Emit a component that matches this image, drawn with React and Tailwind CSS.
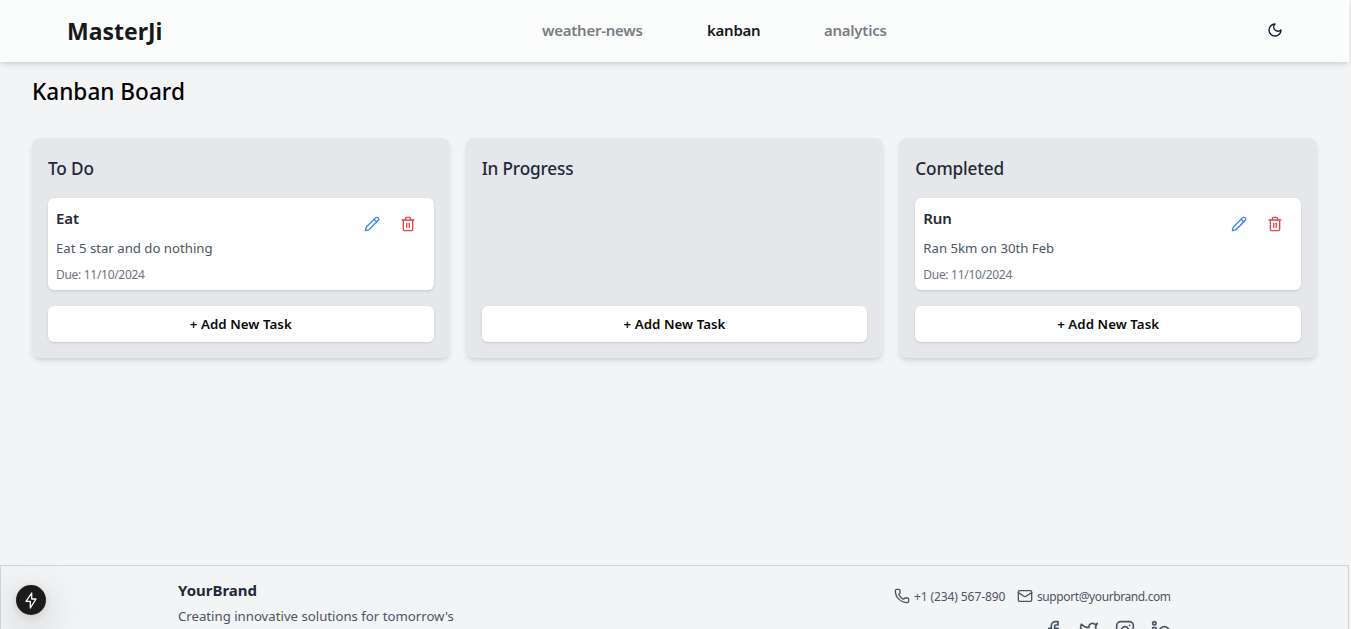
import { Pencil, Trash2, Phone, Mail, Facebook, Twitter, Instagram, Linkedin } from "lucide-react";

const columns = [
  { title: "To Do", tasks: [{ name: "Eat", text: "Eat 5 star and do nothing", due: "11/10/2024" }] },
  { title: "In Progress", tasks: [] },
  { title: "Completed", tasks: [{ name: "Run", text: "Ran 5km on 30th Feb", due: "11/10/2024" }] },
];

function Header() {
  return (
    <header className="flex h-[62px] shrink-0 items-center bg-[#fbfdfc] pl-[67px] pr-[66px] shadow-md">
      <div className="w-[475px] text-[23px] font-bold text-[#18181b]">MasterJi</div>
      <nav className="flex gap-16 pb-0.5 text-[15px] font-semibold tracking-[-0.25px] whitespace-nowrap text-[#7c7c85]">
        <a className="w-[101px]">weather-news</a>
        <a className="w-[53px] text-[#18181b]">kanban</a>
        <a className="w-[63px]">analytics</a>
      </nav>
      <div className="ml-auto pb-0.5">
        <svg className="size-4" viewBox="0 0 24 24" fill="none" stroke="#0f172a" strokeWidth="2" strokeLinecap="round" strokeLinejoin="round">
          <path d="M12 3a6 6 0 0 0 9 9 9 9 0 1 1-9-9Z" />
        </svg>
      </div>
    </header>
  );
}

function Task({ task }) {
  return (
    <article className="flex h-[92px] justify-between rounded-md bg-white p-2 shadow-sm">
      <div className="whitespace-nowrap">
        <h3 className="text-[15px] leading-6 font-semibold tracking-[-0.1px] text-[#1f2937]">{task.name}</h3>
        <p className="mt-2 text-[13.2px] leading-5 text-[#4b5563]">{task.text}</p>
        <p className="mt-2 text-[12px] leading-[18px] tracking-[-0.3px] text-[#6b7280]">Due: {task.due}</p>
      </div>
      <div className="flex gap-5 pt-2.5 pr-2.5">
        <Pencil size={16} className="text-[#3b82f6]" />
        <Trash2 size={16} className="text-[#ef4444]" />
      </div>
    </article>
  );
}

function Column({ column }) {
  return (
    <section className="flex h-[220px] flex-col rounded-lg bg-[#e5e7eb] p-4 shadow-md">
      <h2 className="mb-[15px] pt-px text-[17.2px] leading-7 font-[550] tracking-[-0.15px] text-[#1f2937]">{column.title}</h2>
      {column.tasks.map((task) => (
        <Task key={task.name} task={task} />
      ))}
      <button className="mt-auto h-9 rounded-md bg-white text-[13.3px] leading-5 font-semibold tracking-[0.05px] text-zinc-950 shadow-sm">+ Add New Task</button>
    </section>
  );
}

function Footer() {
  return (
    <footer className="mt-auto flex h-16 shrink-0 items-start justify-between overflow-hidden border border-b-0 border-[#d1d5db] pr-[177px] pl-[177px] whitespace-nowrap">
      <div className="pt-3">
        <h4 className="text-[15px] leading-6 font-bold text-[#1f2937]">YourBrand</h4>
        <p className="mt-1 text-[13.2px] leading-5 text-[#4b5563]">Creating innovative solutions for tomorrow's</p>
      </div>
      <div className="flex flex-col items-end pt-[22px] text-[#4b5563]">
        <div className="flex h-[18px] gap-3 text-[12px] leading-[18px]">
          <span className="flex w-[111px] gap-1 tracking-[-0.1px]"><Phone size={16} className="shrink-0" />+1 (234) 567-890</span>
          <span className="flex w-[154px] gap-1 tracking-[-0.4px]"><Mail size={16} className="shrink-0" />support@yourbrand.com</span>
        </div>
        <div className="mt-3.5 flex gap-4">
          <Facebook size={20} />
          <Twitter size={20} />
          <Instagram size={20} />
          <Linkedin size={20} />
        </div>
      </div>
    </footer>
  );
}

export default function App() {
  return (
    <div className="h-[629px] overflow-hidden bg-[#f4f4f4] font-['Noto_Sans',sans-serif]">
      <div className="flex h-full w-[1349px] flex-col bg-[#f3f4f6]">
        <Header />
        <main className="px-8 pt-3">
          <h1 className="text-[22.6px] leading-9 font-medium text-black">Kanban Board</h1>
          <div className="mt-7 grid grid-cols-3 gap-4">
            {columns.map((column) => (
              <Column key={column.title} column={column} />
            ))}
          </div>
        </main>
        <Footer />
      </div>
      <div className="fixed top-[585px] left-4 flex size-[30px] items-center justify-center rounded-full bg-[#1b1b1c] shadow-[0_11px_40px_rgba(0,0,0,0.25),0_2px_10px_rgba(0,0,0,0.12)]">
        <svg className="h-[17px] w-3" viewBox="0 0 12 17" fill="none" stroke="white" strokeWidth="1.3" strokeLinejoin="round">
          <path d="M6.7 1 1 9.3h4.3V16L11 7H6.7Z" />
        </svg>
      </div>
    </div>
  );
}
